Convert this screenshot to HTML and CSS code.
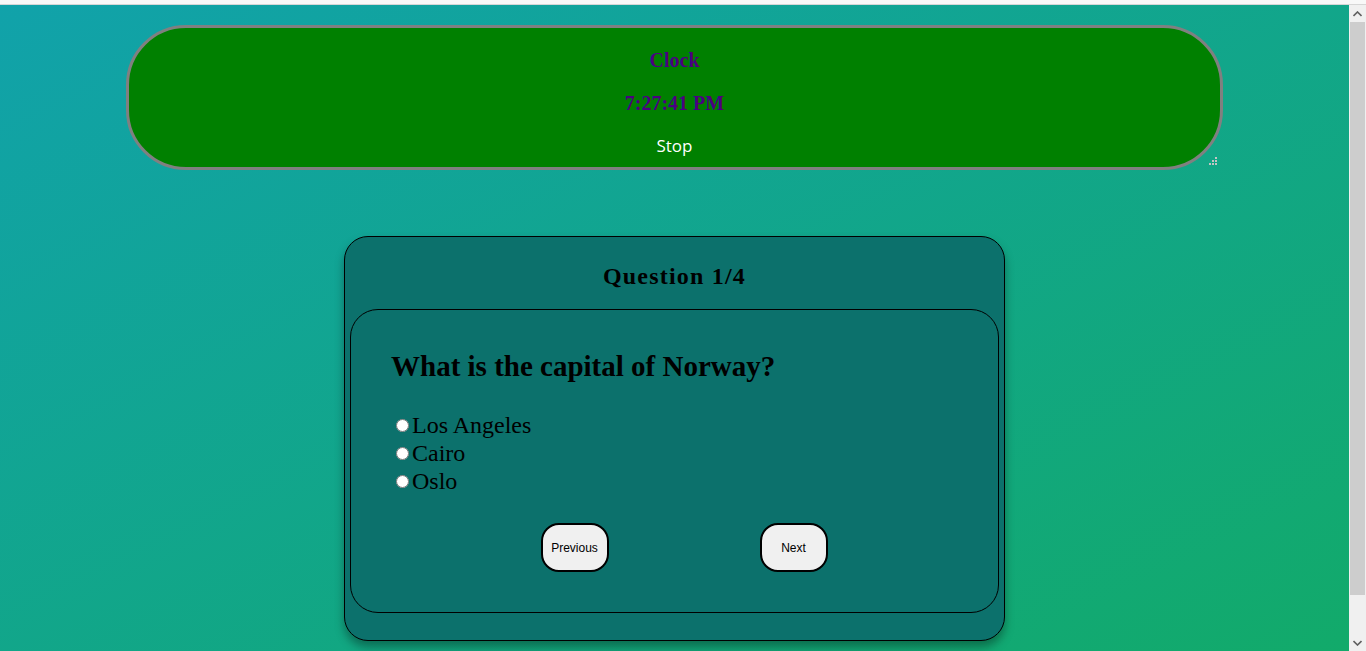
FILE: index.html
```html
<!DOCTYPE html>
<html lang="en">
<head>
<meta charset="utf-8">
<title>Quiz</title>
<link rel="stylesheet" href="styles.css">
</head>
<body>
<div class="chrome"></div>
<div class="viewport">
  <main class="page">
    <section class="clock">
      <h3 class="clock-title">Clock</h3>
      <div class="clock-time">7:27:41 PM</div>
      <button class="clock-stop" type="button">Stop</button>
      <svg class="grip" width="8" height="8" viewBox="0 0 8 8">
        <rect x="6" y="0" width="2" height="2"/>
        <rect x="3" y="3" width="2" height="2"/>
        <rect x="6" y="3" width="2" height="2"/>
        <rect x="0" y="6" width="2" height="2"/>
        <rect x="3" y="6" width="2" height="2"/>
        <rect x="6" y="6" width="2" height="2"/>
      </svg>
    </section>

    <section class="quiz">
      <h2 class="quiz-count">Question 1/4</h2>
      <div class="quiz-inner">
        <h1 class="quiz-question">What is the capital of Norway?</h1>
        <div class="options">
          <label class="option"><input type="radio" name="q1"><span>Los Angeles</span></label>
          <label class="option"><input type="radio" name="q1"><span>Cairo</span></label>
          <label class="option"><input type="radio" name="q1"><span>Oslo</span></label>
        </div>
        <div class="nav">
          <button class="nav-btn" type="button">Previous</button>
          <button class="nav-btn" type="button">Next</button>
        </div>
      </div>
    </section>
  </main>
  <div class="scrollbar">
    <div class="sb-arrow sb-up"><svg width="9" height="6" viewBox="0 0 9 6"><path d="M0.5 5 L4.5 1 L8.5 5" fill="none" stroke="#606060" stroke-width="1.6"/></svg></div>
    <div class="sb-track"><div class="sb-thumb"></div></div>
    <div class="sb-arrow sb-down"><svg width="9" height="6" viewBox="0 0 9 6"><path d="M0.5 1 L4.5 5 L8.5 1" fill="none" stroke="#606060" stroke-width="1.6"/></svg></div>
  </div>
</div>
</body>
</html>
```

FILE: styles.css
```css
html, body {
  margin: 0;
  padding: 0;
  height: 100%;
  overflow: hidden;
}

body {
  display: flex;
  flex-direction: column;
  font-family: "Liberation Serif", serif;
}

.chrome {
  height: 4px;
  background: #f8f8f8;
  border-bottom: 1px solid #d6d6d6;
  flex: none;
}

.viewport {
  flex: 1;
  display: flex;
  min-height: 0;
}

.page {
  flex: 1;
  background: linear-gradient(to bottom right, #11a2aa, #12aa6a);
  display: flex;
  flex-direction: column;
  align-items: center;
  padding-top: 20px;
  overflow: hidden;
}

.clock {
  position: relative;
  box-sizing: border-box;
  width: 1097px;
  background: #008000;
  border: 3px solid #808080;
  border-radius: 60px;
  padding: 20px 0 9px;
  display: flex;
  flex-direction: column;
  align-items: center;
  gap: 19px;
}

.grip {
  position: absolute;
  right: 3px;
  bottom: 2px;
  fill: #c4c4c4;
}

.clock-title,
.clock-time {
  margin: 0;
  font-family: "Liberation Serif", serif;
  font-weight: bold;
  font-size: 20px;
  line-height: 24px;
  color: #4b0082;
}

.clock-stop {
  margin: 0;
  padding: 0;
  border: none;
  background: transparent;
  color: #ffffff;
  font-family: "Open Sans", sans-serif;
  font-size: 17px;
  line-height: 24px;
}

.quiz {
  box-sizing: border-box;
  width: 661px;
  margin-top: 66px;
  background: #0c716c;
  border: 1px solid #000;
  border-radius: 24px;
  padding: 0 5px 27px;
  box-shadow: 0 6px 10px rgba(0, 0, 0, 0.35);
}

.quiz-count {
  margin: 0;
  height: 72px;
  display: flex;
  align-items: center;
  justify-content: center;
  padding-top: 6px;
  box-sizing: border-box;
  font-family: "Liberation Serif", serif;
  font-weight: bold;
  font-size: 24px;
  letter-spacing: 1.2px;
  color: #000;
}

.quiz-inner {
  border: 1px solid #000;
  border-radius: 28px;
  padding: 38px 40px 40px;
}

.quiz-question {
  margin: 0;
  font-family: "Liberation Serif", serif;
  font-weight: bold;
  font-size: 29px;
  line-height: 36px;
  color: #000;
}

.options {
  margin-top: 27px;
  display: flex;
  flex-direction: column;
}

.option {
  display: flex;
  align-items: center;
  font-size: 24px;
  line-height: 28px;
  color: #000;
}

.option input {
  margin: 0 3px 0 5px;
  width: 13px;
  height: 13px;
}

.nav {
  margin-top: 28px;
  display: flex;
  justify-content: center;
  gap: 151px;
  padding-left: 19px;
}

.nav-btn {
  box-sizing: border-box;
  width: 68px;
  height: 49px;
  background: #f0f0f0;
  border: 2px solid #000;
  border-radius: 18px;
  font-family: "Liberation Sans", sans-serif;
  font-size: 12px;
  color: #000;
  padding: 0;
}

.scrollbar {
  width: 17px;
  flex: none;
  background: #f0f0f0;
  display: flex;
  flex-direction: column;
}

.sb-arrow {
  height: 17px;
  display: flex;
  align-items: center;
  justify-content: center;
  flex: none;
}

.sb-track {
  flex: 1;
  padding: 0 1px;
}

.sb-thumb {
  height: 573px;
  background: #cdcdcd;
}
```
